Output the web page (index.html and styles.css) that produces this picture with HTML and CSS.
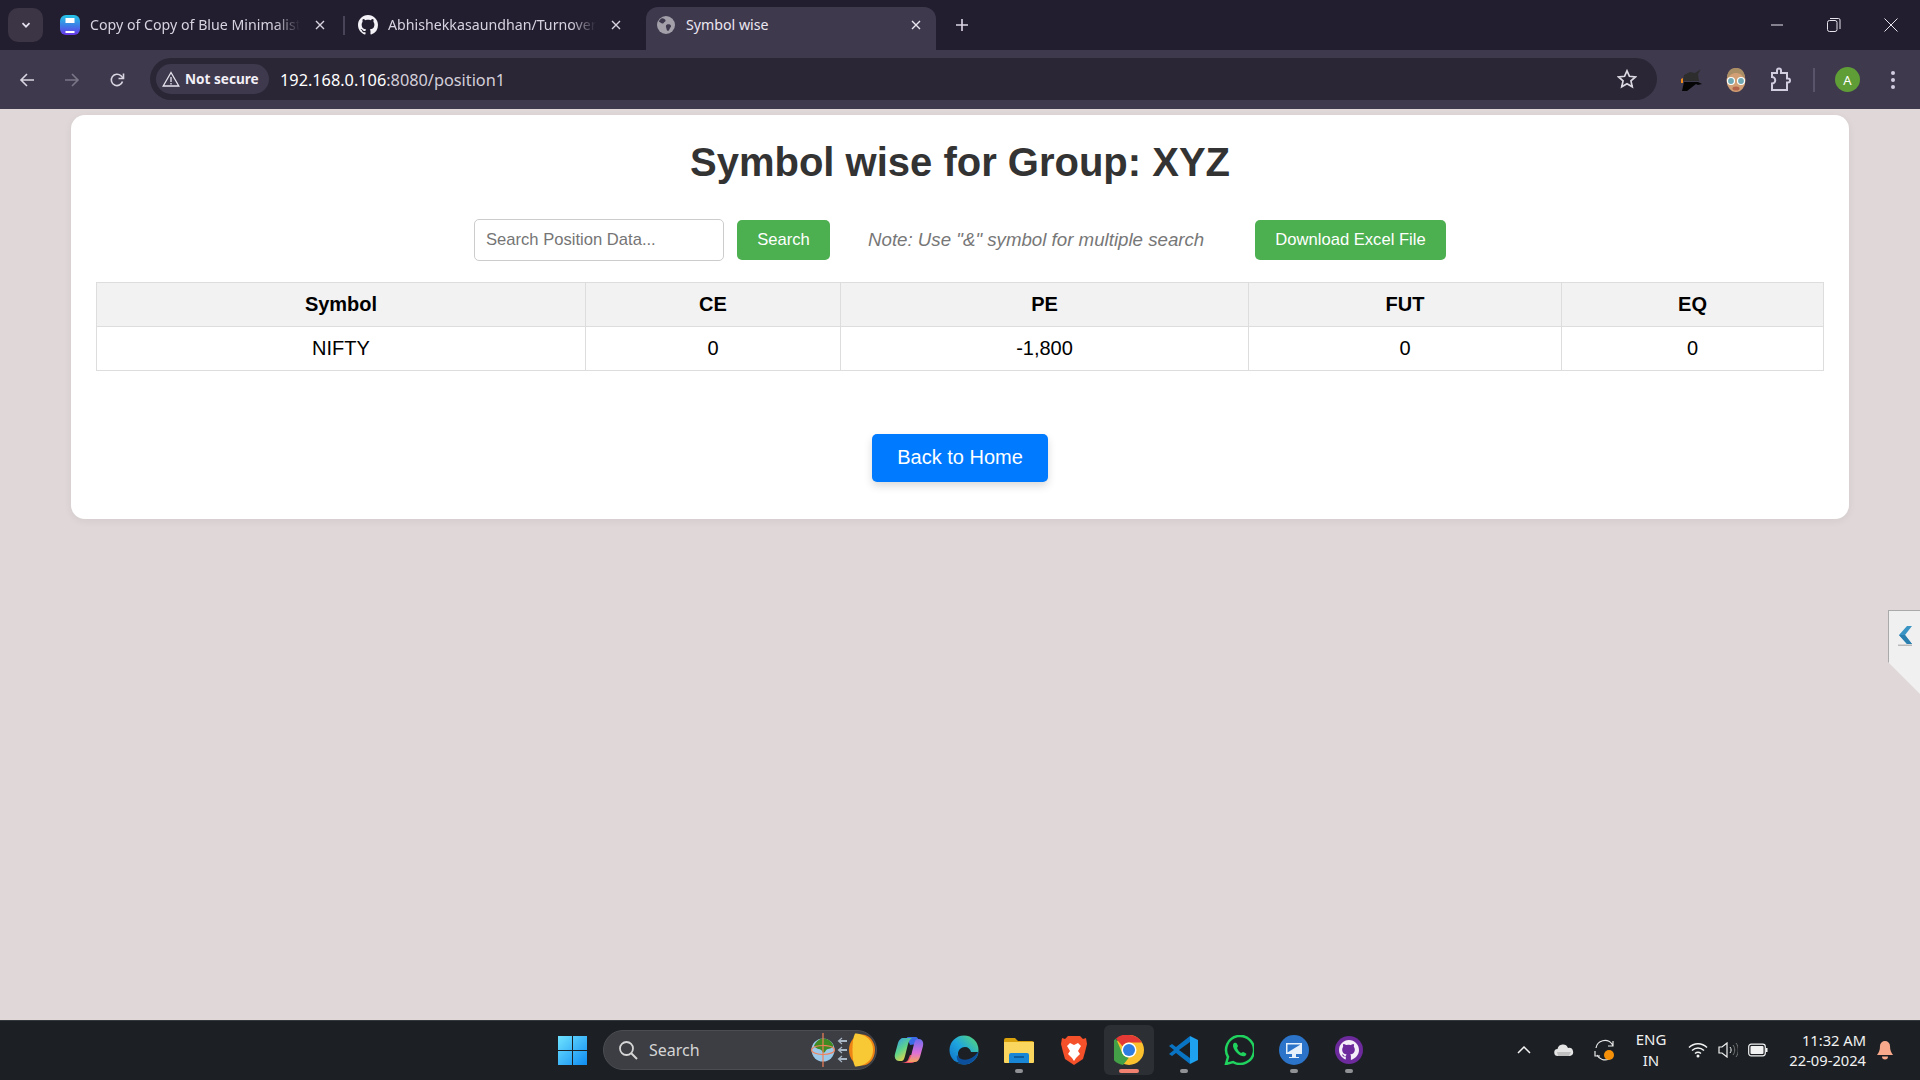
FILE: index.html
```html
<!DOCTYPE html>
<html lang="en">
<head>
<meta charset="utf-8">
<title>Symbol wise</title>
<link rel="stylesheet" href="styles.css">
</head>
<body>
<div class="browser">
  <header class="tabstrip">
    <button class="tab-list"><svg width="12" height="12" viewBox="0 0 12 12"><path d="M2.5 4.2 6 7.7l3.5-3.5" fill="none" stroke="#e6e1ee" stroke-width="1.7"/></svg></button>
    <div class="tab tab-one">
      <svg class="favicon" viewBox="0 0 20 20"><defs><linearGradient id="fg" x1="0" y1="0" x2="0" y2="1"><stop offset="0" stop-color="#25c7e8"/><stop offset=".5" stop-color="#3b82e6"/><stop offset="1" stop-color="#6a35ea"/></linearGradient></defs><rect width="20" height="20" rx="6" fill="url(#fg)"/><rect x="5.5" y="3" width="9" height="5" fill="#fff"/><rect x="5.5" y="16" width="9" height="2" fill="#fff"/></svg>
      <span class="tab-title">Copy of Copy of Blue Minimalist</span>
      <svg class="tab-x" viewBox="0 0 10 10"><path d="M1 1l8 8M9 1 1 9" stroke="#d8d3e0" stroke-width="1.4"/></svg>
    </div>
    <span class="tab-sep"></span>
    <div class="tab tab-two">
      <svg class="favicon" viewBox="0 0 16 16"><path fill="#f4f2f7" d="M8 0C3.58 0 0 3.58 0 8c0 3.54 2.29 6.53 5.47 7.59.4.07.55-.17.55-.38 0-.19-.01-.82-.01-1.49-2.01.37-2.53-.49-2.69-.94-.09-.23-.48-.94-.82-1.13-.28-.15-.68-.52-.01-.53.63-.01 1.08.58 1.23.82.72 1.21 1.87.87 2.33.66.07-.52.28-.87.51-1.07-1.78-.2-3.64-.89-3.64-3.95 0-.87.31-1.59.82-2.15-.08-.2-.36-1.02.08-2.12 0 0 .67-.21 2.2.82.64-.18 1.32-.27 2-.27s1.36.09 2 .27c1.53-1.04 2.2-.82 2.2-.82.44 1.1.16 1.92.08 2.12.51.56.82 1.27.82 2.15 0 3.07-1.87 3.75-3.65 3.95.29.25.54.73.54 1.48 0 1.07-.01 1.93-.01 2.2 0 .21.15.46.55.38A8.01 8.01 0 0 0 16 8c0-4.42-3.58-8-8-8z"/></svg>
      <span class="tab-title">Abhishekkasaundhan/Turnover-</span>
      <svg class="tab-x" viewBox="0 0 10 10"><path d="M1 1l8 8M9 1 1 9" stroke="#d8d3e0" stroke-width="1.4"/></svg>
    </div>
    <div class="tab tab-active">
      <svg class="favicon favicon-small" viewBox="0 0 18 18"><circle cx="9" cy="9" r="9" fill="#a3a0aa"/><path fill="#3f394e" d="M5 2.2c2 .3 3.4 1 3.6 2.2.2 1.3-1.4 1.4-2 2.5-.5 1-2 .8-3.300-.3L1.800 5.400C2.500 4 3.600 2.900 5 2.200zM10 8.500c1.500-.5 3.500 0 4 1.200.3 1-.6 1.700-1.200 2.700-.6 1.200-1 2.600-2.300 2.400-1-.2-.8-2-1.300-3-.5-1.300-.3-2.900.8-3.300z"/></svg>
      <span class="tab-title">Symbol wise</span>
      <svg class="tab-x" viewBox="0 0 10 10"><path d="M1 1l8 8M9 1 1 9" stroke="#ebe7f0" stroke-width="1.400"/></svg>
    </div>
    <svg class="new-tab" viewBox="0 0 14 14"><path d="M7 1v12M1 7h12" stroke="#dcd6e6" stroke-width="1.600"/></svg>
    <div class="window-controls">
      <svg viewBox="0 0 14 14" width="14" height="14"><path d="M1 7h12" stroke="#e8e4ee" stroke-width="1"/></svg>
      <svg viewBox="0 0 14 14" width="14" height="14"><rect x=".5" y="2.500" width="9.500" height="11" rx="2" fill="none" stroke="#e8e4ee"/><path d="M3 .5h8.500a1.500 1.500 0 0 1 1.500 1.500v9" fill="none" stroke="#e8e4ee"/></svg>
      <svg viewBox="0 0 14 14" width="14" height="14"><path d="M.5.5l13 13M13.500.5l-13 13" stroke="#e8e4ee" stroke-width="1"/></svg>
    </div>
  </header>

  <nav class="toolbar">
    <svg class="nav-icon" viewBox="0 0 16 16"><path d="M15 8H2M8 2 2 8l6 6" fill="none" stroke="#d9d5e0" stroke-width="1.600"/></svg>
    <svg class="nav-icon" viewBox="0 0 16 16"><path d="M1 8h13M8 2l6 6-6 6" fill="none" stroke="#7b7687" stroke-width="1.600"/></svg>
    <svg class="nav-icon" viewBox="0 0 16 16"><path d="M13.500 9.500A5.700 5.700 0 1 1 12 3.800L14 6" fill="none" stroke="#d9d5e0" stroke-width="1.600"/><path d="M14.500 1.500V6.500H9.500" fill="none" stroke="#d9d5e0" stroke-width="1.600"/></svg>
    <div class="omnibox">
      <span class="security-chip">
        <svg width="18" height="16" viewBox="0 0 18 16"><path d="M9 1.500 1.200 15h15.600z" fill="none" stroke="#e8e4ee" stroke-width="1.300"/><path d="M9 6v5M9 12v1.500" stroke="#e8e4ee" stroke-width="1.300"/></svg>
        <span class="chip-label">Not secure</span>
      </span>
      <span class="url">192.168.0.106<span class="url-dim">:8080/position1</span></span>
      <svg class="star" viewBox="0 0 20 20"><path d="M10 1.800l2.450 5.500 6 .6-4.500 4 1.300 5.900L10 14.700l-5.250 3.100 1.300-5.900-4.500-4 6-.6z" fill="none" stroke="#dcd8e2" stroke-width="1.700"/></svg>
    </div>
    <div class="toolbar-end">
      <svg class="ext" viewBox="0 0 22 26"><path d="M3 8 9 5l5 1 6-4-3 5 1 7H2z" fill="#2d2d2d"/><path d="M3 15h14l4 2-4 1-2-1-9 7H1z" fill="#050505"/><path d="M0 12l2-1v5H0z" fill="#f08a1c"/></svg>
      <svg class="ext" viewBox="0 0 22 26"><ellipse cx="11" cy="13" rx="9.500" ry="12" fill="#d2a074"/><path d="M2 12C2 4 6 1 11 1s9 3 9 11c-3-4-5-6-9-6s-6 2-9 6z" fill="#a98e66"/><circle cx="6" cy="14" r="3.500" fill="#6fa8b2" stroke="#fff" stroke-width="1.200"/><circle cx="16" cy="14" r="3.500" fill="#6fa8b2" stroke="#fff" stroke-width="1.200"/><ellipse cx="11" cy="21.500" rx="3.500" ry="2" fill="#b4654c"/></svg>
      <svg class="ext" viewBox="0 0 22 26"><path d="M3 6h5V3.500a2 2 0 0 1 4 0V6h6v5.500h1a2 2 0 0 1 0 4h-1V23H3v-6.500a3 3 0 0 0 0-6.500z" fill="none" stroke="#d3cde0" stroke-width="2"/></svg>
      <span class="divider"></span>
      <span class="avatar">A</span>
      <svg class="menu" viewBox="0 0 6 20"><circle cx="3" cy="3" r="2" fill="#d3cde0"/><circle cx="3" cy="10" r="2" fill="#d3cde0"/><circle cx="3" cy="17" r="2" fill="#d3cde0"/></svg>
    </div>
  </nav>

  <main class="viewport">
    <section class="card">
      <h1 class="title">Symbol wise for Group: XYZ</h1>
      <form class="search-row">
        <input class="search-input" type="text" placeholder="Search Position Data...">
        <button class="btn btn-green btn-search" type="button">Search</button>
        <span class="note">Note: Use "&amp;" symbol for multiple search</span>
        <button class="btn btn-green btn-download" type="button">Download Excel File</button>
      </form>
      <table class="data-table">
        <colgroup>
          <col class="col-symbol"><col class="col-ce"><col class="col-pe"><col class="col-fut"><col class="col-eq">
        </colgroup>
        <thead><tr><th>Symbol</th><th>CE</th><th>PE</th><th>FUT</th><th>EQ</th></tr></thead>
        <tbody><tr><td>NIFTY</td><td>0</td><td>-1,800</td><td>0</td><td>0</td></tr></tbody>
      </table>
      <a class="home-btn" href="#">Back to Home</a>
    </section>
    <aside class="side-tab">
      <svg width="14" height="20" viewBox="0 0 14 20"><path d="M9 0h5L7 9l7 9H9L1 9z" fill="#3b95c4"/><path d="M1 9h6l7 9H9z" fill="#2a7fae"/><rect y="18.500" width="16" height="1.500" fill="#b9b9b9"/></svg>
    </aside>
  </main>

  <footer class="taskbar">
    <svg class="start" viewBox="0 0 29 29"><defs><linearGradient id="win" x1="0" y1="0" x2="1" y2="1"><stop offset="0" stop-color="#6fe3ff"/><stop offset="1" stop-color="#0f8cf2"/></linearGradient></defs><path fill="url(#win)" d="M0 0h14v14H0zM15 0h14v14H15zM0 15h14v14H0zM15 15h14v14H15z"/></svg>
    <div class="task-search">
      <svg width="20" height="20" viewBox="0 0 20 20"><circle cx="8.500" cy="8.500" r="6.500" fill="none" stroke="#d6d6d6" stroke-width="1.800"/><path d="M13 13l6 6" stroke="#d6d6d6" stroke-width="2"/></svg>
      <span class="task-search-label">Search</span>
      <svg class="search-art" viewBox="0 0 64 34"><circle cx="12" cy="17" r="11.500" fill="#9cc8ea"/><path d="M3 13C5 8 9 5.500 12 5.500c5 0 9 3 10.500 7.500-3 4-6 1.500-8 5-1 2.500-3 2-3.500 0-1-2.500-5-1-8-5z" fill="#3f8a22"/><ellipse cx="12" cy="17" rx="11.500" ry="4.500" fill="none" stroke="#f0805a" stroke-width="1.200" stroke-dasharray="14 0"/><path d="M12 0v34" stroke="#f0805a" stroke-width="1.200"/><path d="M36 8h-8M36 17h-8M36 26h-8" stroke="#a9b6c6" stroke-width="2"/><path d="M31 5l-3.500 3 3.500 3M31 14l-3.500 3 3.500 3M31 23l-3.500 3 3.500 3" stroke="#a9b6c6" fill="none" stroke-width="1.200"/><ellipse cx="51" cy="17" rx="13" ry="15.500" fill="#ee8414"/><path d="M44 .5c8 0 18 5 18 16.500S52 33.500 44 33.500c-2-4-2.500-10-2.500-16.500S42 4.500 44 .5z" fill="#f9c935"/></svg>
    </div>
    <div class="task-icons">
      <span class="task-item"><svg viewBox="0 0 30 30" width="30" height="30"><defs><linearGradient id="cop1" x1="0" y1="0" x2=".6" y2="1"><stop offset="0" stop-color="#2f9bf0"/><stop offset=".55" stop-color="#5fd48a"/><stop offset="1" stop-color="#f6d143"/></linearGradient><linearGradient id="cop2" x1=".5" y1="0" x2=".5" y2="1"><stop offset="0" stop-color="#6d6cf0"/><stop offset=".6" stop-color="#dd6fd8"/><stop offset="1" stop-color="#f5a35c"/></linearGradient></defs><path fill="#3b6ce8" d="M13 2h8c3 0 3.500 2 3 4l-1 3-7 1z"/><path fill="#f0506a" d="M7 28h10c3 0 5-2 6-4l1-3-8-1-2 5c-1 2-4 3-7 3z"/><path fill="url(#cop1)" d="M9 3h9c-2 1-3 3-4 6l-3 12c-1 3-1 4-3 5H5c-3 0-5-3-4-7L4 8c.8-3 3-5 5-5z"/><path fill="url(#cop2)" d="M21 27h-8c2-1 3-3 4-6l3-12c1-3 1-4 3-5h2c3 0 5 3 4 7l-3 11c-.8 3-3 5-5 5z"/></svg></span>
      <span class="task-item"><svg viewBox="0 0 30 30" width="30" height="30"><defs><linearGradient id="edge" x1="0" y1="1" x2="1" y2="0"><stop offset="0" stop-color="#0e6cc6"/><stop offset=".5" stop-color="#1fa6de"/><stop offset="1" stop-color="#5cdc6e"/></linearGradient></defs><circle cx="15" cy="15" r="14.500" fill="url(#edge)"/><path d="M29 17H22c-.500-3-3-5-6-5-4 0-7 3-7 7s3 7.500 7 9.500c-7 1-12-3-12-3 3 2 17 6 25-8z" fill="#1c2024"/><path d="M29.500 16A14.500 14.500 0 0 1 15 29.500C9 29 7 24 8 20c2 4 7 6 12 4 4-1.500 7-4 9.500-8z" fill="#0c4f9c"/></svg></span>
      <span class="task-item task-open"><svg viewBox="0 0 30 28" width="30" height="28"><path d="M0 4a2 2 0 0 1 2-2h9l3 3h14a2 2 0 0 1 2 2v3H0z" fill="#d9a20c"/><path d="M0 6h30v20a1 1 0 0 1-1 1H1a1 1 0 0 1-1-1z" fill="#fbd65f"/><path d="M5 19a2 2 0 0 1 2-2h16a2 2 0 0 1 2 2v8H5z" fill="#1a86d6"/><path d="M10 21h10" stroke="#0b4f88" stroke-width="1.500"/></svg></span>
      <span class="task-item"><svg viewBox="0 0 26 30" width="26" height="30"><path d="M7 1h12l3 3 3-1 1 6-2 8-2 7-6 4-3 2-3-2-6-4-2-7-2-8 1-6 3 1z" fill="#f4502a"/><path d="M13 10l-4-2-3 3 3 5-2 3 4 4 2 3 2-3 4-4-2-3 3-5-3-3z" fill="#fff"/></svg></span>
      <span class="task-item task-active"><svg viewBox="0 0 30 30" width="30" height="30"><circle cx="15" cy="15" r="15" fill="#fbc02d"/><path d="M15 0a15 15 0 0 1 13 7.500H15a7.500 7.500 0 0 0-6.500 3.750L2 3.500A15 15 0 0 1 15 0z" fill="#e53935"/><path d="M2 3.500 8.500 18.750A7.500 7.500 0 0 0 15 22.500L9 30A15 15 0 0 1 2 3.500z" fill="#43a047"/><circle cx="15" cy="15" r="7.500" fill="#fff"/><circle cx="15" cy="15" r="6" fill="#2f7de1"/></svg></span>
      <span class="task-item task-open"><svg viewBox="0 0 30 30" width="30" height="30"><path d="M21 1l8 4v20l-8 4z" fill="#1ea1ef"/><path d="M21 1v6L10 15l11 8v6L7 18l-4 3-3-2 5-4-5-4 3-2 4 3z" fill="#0a74c4"/></svg></span>
      <span class="task-item"><svg viewBox="0 0 30 30" width="30" height="30"><path d="M2 29l2-7A14 14 0 1 1 9 27z" fill="none" stroke="#1fd35e" stroke-width="2.500"/><path d="M10 8c-2 2-1 6 3 10s8 4 9 2c1-1 0-2-3-3l-2 1c-2-1-3-3-4-5l1-2c-1-3-2-4-4-3z" fill="#1fd35e"/></svg></span>
      <span class="task-item task-open"><svg viewBox="0 0 30 30" width="30" height="30"><circle cx="15" cy="15" r="15" fill="#2b74c9"/><rect x="7" y="8" width="16" height="11" fill="#e6f0fb"/><path d="M8.500 9.500h13L8.500 17.500z" fill="#2b74c9"/><path d="M13 19h4v3h3v1H10v-1h3z" fill="#e6f0fb"/></svg></span>
      <span class="task-item task-open"><svg viewBox="0 0 28 28" width="28" height="28"><circle cx="14" cy="14" r="14" fill="#6c2a9c"/><path fill="#f3eef7" d="M14 4C8.500 4 4 8.500 4 14c0 4.400 2.900 8.200 6.800 9.500v-3c-2.800.6-3.400-1.200-3.900-2.300.9.100 1.700 1 2.300 1.500.5.300 1.100.3 1.800 0 .1-.7.400-1.100.7-1.400-2.300-.3-4.500-1.300-4.500-4.900 0-1.100.4-2 1-2.700-.1-.3-.4-1.300.1-2.600 0 0 .9-.3 2.800 1a9.500 9.500 0 0 1 4.800 0c1.900-1.300 2.800-1 2.800-1 .5 1.300.2 2.300.1 2.600.6.700 1 1.600 1 2.700 0 3.600-2.300 4.600-4.600 4.900.4.300.7.900.7 1.900v3.700C21.100 22.200 24 18.400 24 14c0-5.500-4.500-10-10-10z"/></svg></span>
    </div>
    <div class="tray">
      <svg class="tray-chevron" viewBox="0 0 14 8" width="14" height="8"><path d="M1 7l6-6 6 6" fill="none" stroke="#f2f2f2" stroke-width="1.500"/></svg>
      <svg class="tray-cloud" viewBox="0 0 20 14" width="20" height="14"><path d="M4 13a3.500 3.500 0 0 1-.5-7A5.500 5.500 0 0 1 14 5a4 4 0 0 1 2 8z" fill="#e4e4e4"/><path d="M3 9h14l-2 4H4z" fill="#a9a9a9" opacity=".6"/></svg>
      <svg class="tray-sync" viewBox="0 0 22 22" width="22" height="22"><path d="M2 9a9 9 0 0 1 16-4l1 2M19 2v5h-5M15 20a9 9 0 0 1-12-4" fill="none" stroke="#e8e8e8" stroke-width="1.200"/><path d="M1 12v5h5" fill="none" stroke="#e8e8e8" stroke-width="1.200"/><circle cx="15" cy="16" r="5" fill="#f79009"/></svg>
      <span class="tray-lang">ENG<br>IN</span>
      <div class="tray-status">
        <svg viewBox="0 0 20 16" width="20" height="16"><path d="M1 5.500c5-5 13-5 18 0M4 8.500c3.500-3.300 8.500-3.300 12 0M7 11.500c1.800-1.500 4.200-1.500 6 0" fill="none" stroke="#f2f2f2" stroke-width="1.500"/><circle cx="10" cy="14" r="1.500" fill="#f2f2f2"/></svg>
        <svg viewBox="0 0 20 16" width="20" height="16"><path d="M1 5h3l5-4v14l-5-4H1z" fill="none" stroke="#f2f2f2" stroke-width="1.200"/><path d="M12 5c1.500 2 1.500 4 0 6" fill="none" stroke="#f2f2f2"/><path d="M15 3c2.300 3 2.300 7 0 10M18 1c3 4 3 10 0 14" fill="none" stroke="#777"/></svg>
        <svg viewBox="0 0 20 14" width="20" height="14"><rect x=".7" y="1.200" width="16.600" height="11.600" rx="2.500" fill="none" stroke="#f2f2f2" stroke-width="1.200"/><rect x="2.500" y="3" width="13" height="8" rx="1" fill="#f2f2f2"/><rect x="18" y="5" width="1.500" height="4" fill="#f2f2f2"/></svg>
      </div>
      <span class="tray-clock">11:32 AM<br>22-09-2024</span>
      <svg class="tray-bell" viewBox="0 0 16 20" width="16" height="20"><path d="M8 1a5 5 0 0 0-5 5c0 4-1 6-3 9h16c-2-3-3-5-3-9a5 5 0 0 0-5-5z" fill="#f8a98c"/><path d="M5 16.500h6a3 3 0 0 1-6 0z" fill="#f8a98c"/></svg>
    </div>
  </footer>
</div>
</body>
</html>
```
FILE: styles.css
```css
* { box-sizing: border-box; }
html, body { margin: 0; height: 100%; overflow: hidden; }
body { font-family: "Liberation Sans", Arial, sans-serif; background: #e0d8d8; }
.browser { display: flex; flex-direction: column; height: 1080px; }

/* tab strip */
.tabstrip { flex: 0 0 50px; display: flex; align-items: flex-start; background: #231e2f; padding: 7px 0 0 8px; color: #d8d3e0; font: 14px "Noto Sans", sans-serif; position: relative; }
.tab-list { width: 35px; height: 34px; margin-top: 1px; border: 0; border-radius: 10px; background: #3b3546; display: flex; align-items: center; justify-content: center; padding: 0; }
.tab { display: flex; align-items: center; height: 43px; padding-bottom: 8px; }
.tab-one { width: 283px; margin-left: 17px; }
.tab-two { width: 274px; margin-left: 13px; }
.tab-sep { width: 2px; height: 19px; margin-top: 9px; background: #4a4458; }
.tab-active { width: 290px; margin-left: 14px; padding: 0 15px 8px 11px; background: #3f394e; border-radius: 12px 12px 0 0; color: #ebe7f0; }
.favicon { width: 20px; height: 20px; flex: none; margin-right: 10px; }
.favicon-small { width: 18px; height: 18px; margin-right: 11px; }
.tab-title { flex: 1; min-width: 0; white-space: nowrap; overflow: hidden; font-size: 14.2px; -webkit-mask-image: linear-gradient(to right, #000 88%, transparent); mask-image: linear-gradient(to right, #000 88%, transparent); }
.tab-active .tab-title { -webkit-mask-image: none; mask-image: none; }
.tab-x { width: 10px; height: 10px; flex: none; margin: 0 11px 0 15px; }
.tab-one .tab-x { margin-right: 18px; }
.tab-active .tab-x { margin: 0; }
.new-tab { width: 14px; height: 14px; margin: 11px 0 0 19px; }
.window-controls { margin-left: auto; display: flex; gap: 43px; padding: 11px 22px 0 0; }

/* toolbar */
.toolbar { flex: 0 0 59px; display: flex; align-items: center; background: #3f394e; padding: 0 0 0 19px; gap: 29px; }
.nav-icon { width: 16px; height: 16px; flex: none; }
.omnibox { flex: 0 0 1507px; margin-left: -4px; margin-top: -1px; height: 42px; border-radius: 21px; background: #2b2635; display: flex; align-items: center; padding: 0 20px 0 6px; color: #fff; }
.security-chip { display: flex; align-items: center; gap: 5px; height: 30px; width: 113px; padding-left: 6px; border-radius: 15px; background: #3f394e; color: #f2eff6; font: 700 13.6px "Noto Sans", sans-serif; white-space: nowrap; }
.chip-label { position: relative; top: -1px; }
.url { margin-left: 11px; padding-top: 1px; font: 16.3px "Noto Sans", sans-serif; color: #fff; flex: 1; }
.url-dim { color: #d3cfda; }
.star { width: 20px; height: 20px; }
.toolbar-end { display: flex; align-items: center; margin-left: -5px; }
.ext { width: 22px; height: 26px; margin-right: 22px; flex: none; }
.divider { width: 2px; height: 24px; background: #5a546a; margin: 0 20px 0 0; }
.avatar { width: 25px; height: 25px; border-radius: 50%; background: #5f9e36; color: #fff; font: 13px "Noto Sans", sans-serif; display: flex; align-items: center; justify-content: center; flex: none; }
.menu { width: 6px; height: 20px; margin-left: 30px; flex: none; }

/* page */
.viewport { flex: 1; min-height: 0; padding: 6px 71px 0; position: relative; overflow: hidden; background: #e0d8d8; }
.card { height: 404px; background: #fff; border-radius: 14px; box-shadow: 0 2px 8px rgba(0,0,0,.06); padding: 24px 25px 0; display: flex; flex-direction: column; align-items: center; }
.title { margin: 0; font-size: 40px; line-height: 46px; font-weight: 700; color: #333; text-align: center; }
.search-row { display: flex; align-items: center; margin-top: 34px; height: 42px; }
.search-input { width: 250px; height: 42px; border: 1px solid #ccc; border-radius: 5px; padding: 0 11px; font: 16.6px "Liberation Sans", Arial, sans-serif; color: #333; outline: none; }
.search-input::placeholder { color: #757575; opacity: 1; }
.btn { height: 40px; border: 0; border-radius: 5px; color: #fff; font: 16.6px "Liberation Sans", Arial, sans-serif; padding: 0; }
.btn-green { background: #4caf50; }
.btn-search { width: 93px; margin-left: 13px; }
.note { width: 425px; padding-left: 38px; font-size: 18.7px; font-style: italic; color: #777; white-space: nowrap; }
.btn-download { width: 191px; }
.data-table { width: 1727px; margin-top: 21px; align-self: flex-start; border-collapse: collapse; table-layout: fixed; font-size: 20px; color: #000; }
.col-symbol { width: 489px; }
.col-ce { width: 255px; }
.col-pe { width: 408px; }
.col-fut { width: 313px; }
.col-eq { width: 262px; }
.data-table th, .data-table td { border: 1px solid #ddd; height: 44px; padding: 0; text-align: center; font-weight: 400; }
.data-table th { background: #f2f2f2; font-weight: 700; }
.home-btn { margin-top: 63px; width: 176px; height: 48px; background: #007bff; color: #fff; border-radius: 5px; font-size: 20px; line-height: 46px; text-align: center; text-decoration: none; box-shadow: 0 4px 8px rgba(0,0,0,.15); }
.side-tab { position: absolute; right: 0; top: 501px; width: 32px; height: 84px; background: #f0f0f0; border-top: 1px solid #aaa; border-left: 1px solid #aaa; padding: 15px 0 0 9px; clip-path: polygon(0 0, 100% 0, 100% 100%, 0 62%); }

/* taskbar */
.taskbar { flex: 0 0 60px; display: flex; align-items: center; background: #1c2024; border-top: 1px solid #34383c; padding: 0 0 1px 558px; position: relative; color: #f2f2f2; }
.start { width: 29px; height: 29px; flex: none; }
.task-search { width: 274px; height: 40px; margin-left: 16px; flex: none; border-radius: 20px; background: #3c3e43; border: 1px solid #4b4d51; display: flex; align-items: center; padding-left: 14px; gap: 11px; position: relative; }
.task-search-label { font: 16px "Noto Sans", sans-serif; color: #d5d5d5; }
.search-art { width: 64px; height: 34px; margin-left: auto; margin-right: 1px; }
.task-icons { display: flex; gap: 5px; margin-left: 7px; flex: none; }
.task-item { width: 50px; height: 50px; display: flex; align-items: center; justify-content: center; border-radius: 6px; position: relative; }
.task-active { background: #2c3035; }
.task-open::after, .task-active::after { content: ""; position: absolute; bottom: 2px; left: 50%; width: 8px; height: 4px; margin-left: -4px; border-radius: 2px; background: #8f9194; }
.task-active::after { width: 20px; margin-left: -10px; background: #f08070; }
.tray { display: flex; align-items: center; flex: none; margin-left: 143px; }
.tray-chevron { margin-right: 23px; }
.tray-cloud { margin-right: 20px; }
.tray-sync { margin-right: 15px; }
.tray-lang { width: 40px; text-align: center; font: 15px/21px "Noto Sans", sans-serif; color: #f0f0f0; }
.tray-status { display: flex; align-items: center; gap: 10px; margin-left: 17px; }
.tray-clock { width: 92px; margin-left: 6px; text-align: right; font: 14.7px/20px "Noto Sans", sans-serif; white-space: nowrap; color: #f2f2f2; }
.tray-bell { margin-left: 11px; }
```
